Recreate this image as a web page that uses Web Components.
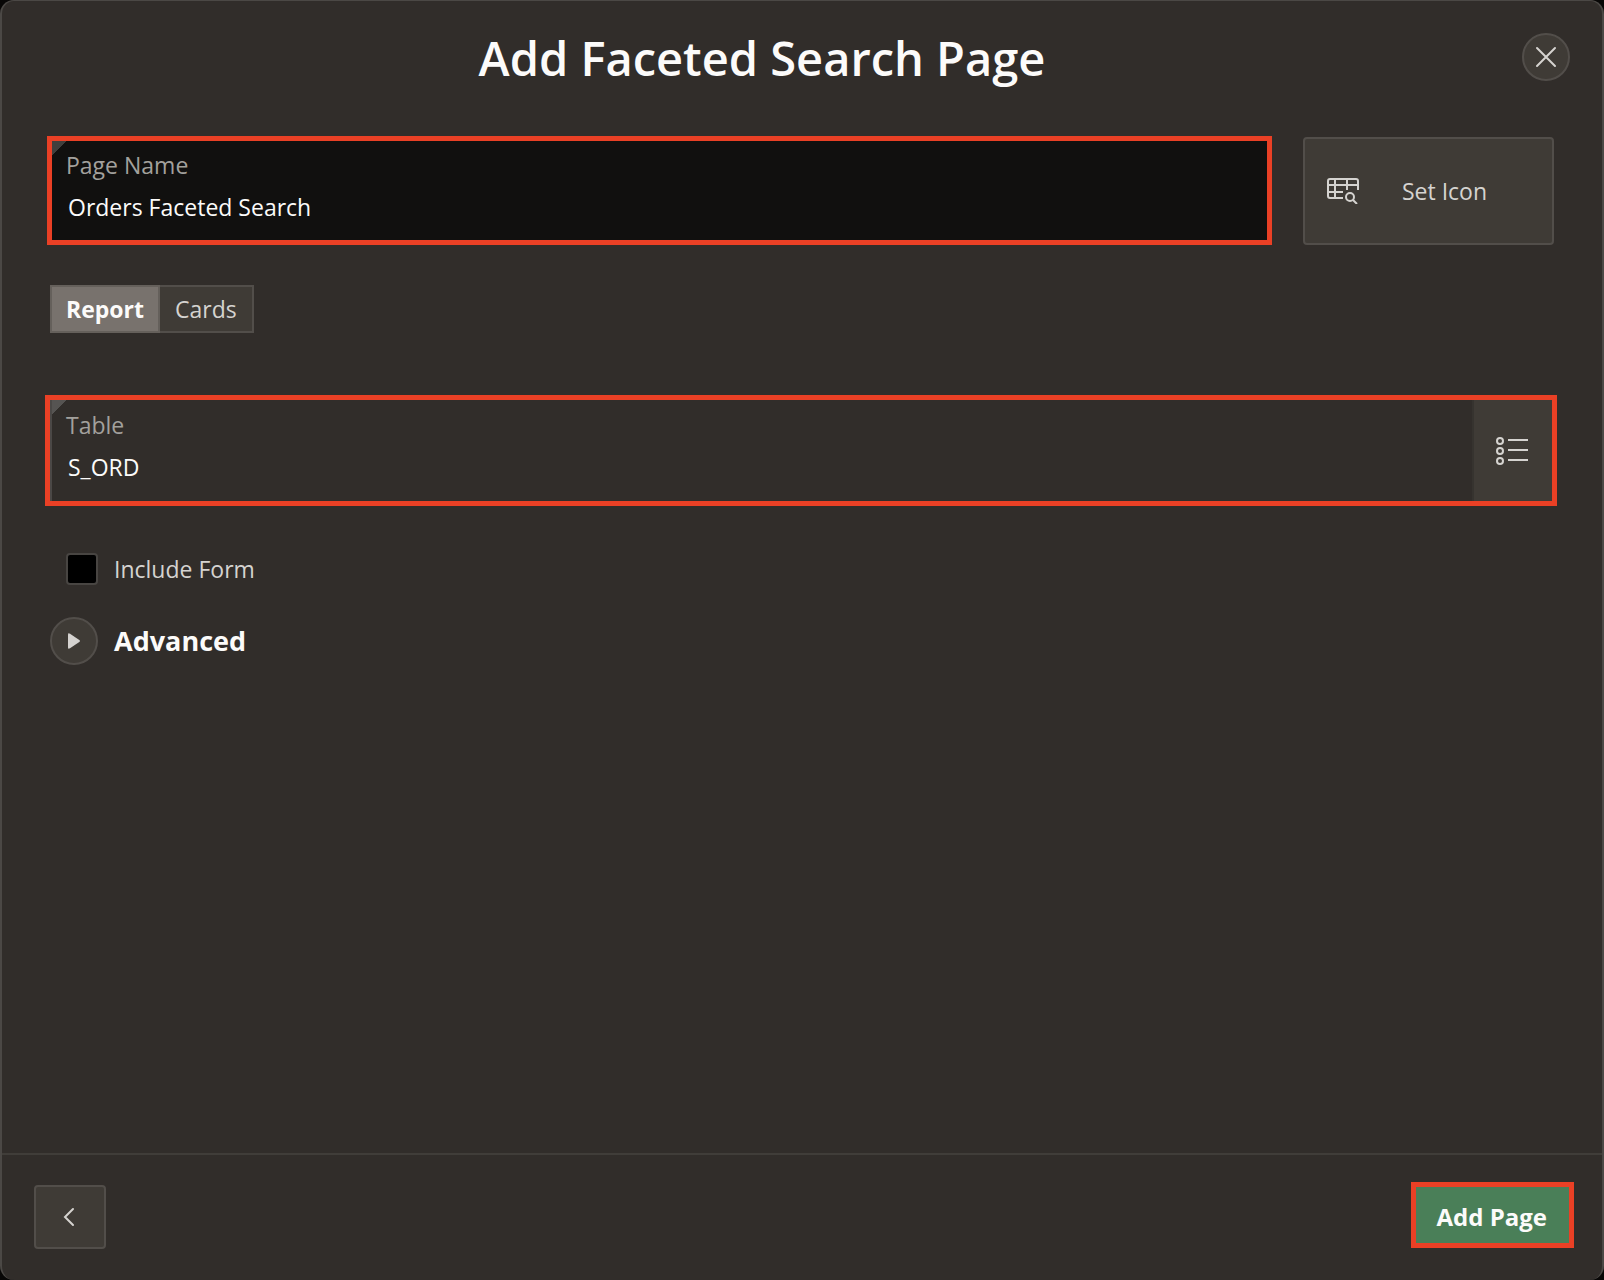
<!DOCTYPE html>
<html lang="en">
<head>
<meta charset="utf-8">
<title>Add Faceted Search Page</title>
<style>
  :root {
    --surface: #312d2a;
    --raised: #3f3b36;
    --line: #524e4a;
    --text: #fcfbfa;
    --text-soft: #d5d3d0;
    --text-muted: #a3a19d;
    --mark: #ea4025;
  }
  body { margin: 0; background: #080706; color: var(--text); font: 23px/32px "Open Sans", "Noto Sans", sans-serif; }
</style>
</head>
<body>
<wizard-dialog>
  <span slot="title">Add Faceted Search Page</span>
  <form-row>
    <text-field marked filled label="Page Name" value="Orders Faceted Search"></text-field>
    <icon-picker>Set Icon</icon-picker>
  </form-row>
  <pill-group></pill-group>
  <text-field marked lov label="Table" value="S_ORD"></text-field>
  <check-option>Include Form</check-option>
  <collapse-region>Advanced</collapse-region>
  <nav-button slot="footer" kind="back"></nav-button>
  <nav-button slot="footer" kind="hot">Add Page</nav-button>
</wizard-dialog>

<script>
const define = (name, render) => customElements.define(name, class extends HTMLElement {
  connectedCallback() {
    if (this.shadowRoot) return;
    this.attachShadow({ mode: "open" }).innerHTML =
      "<style>*{box-sizing:border-box}button,input{font:inherit;margin:0}button{cursor:pointer}svg{display:block;flex:none}</style>" + render(this);
  }
});

define("wizard-dialog", () => `
  <style>
    :host { display: flex; flex-direction: column; min-height: 100vh; box-sizing: border-box; background: var(--surface);
      border: solid #4b4845; border-width: 1px 2px 0; border-radius: 14px; }
    header { display: flex; align-items: center; gap: 30px; padding: 24px 32px 24px 30px; }
    h1 { flex: 1; margin: 0; padding-top: 2px; text-align: center; font-size: 47px; line-height: 62px; font-weight: 600; }
    header button { display: grid; place-items: center; width: 48px; height: 48px; padding: 0; border-radius: 50%;
      border: 2px solid var(--line); background: var(--raised); color: var(--text-soft); }
    main { flex: 1; display: flex; flex-direction: column; padding: 23px 45px 32px 43px; }
    footer { display: flex; justify-content: space-between; align-items: flex-end; padding: 27px 28px 31px 32px; border-top: 2px solid #403d39; }
  </style>
  <header>
    <h1><slot name="title"></slot></h1>
    <button type="button" aria-label="Close"><svg width="22" height="22" viewBox="0 0 22 22" fill="none" stroke="currentColor" stroke-width="2" stroke-linecap="round"><path d="M2 2l18 18M20 2L2 20"/></svg></button>
  </header>
  <main><slot></slot></main>
  <footer><slot name="footer"></slot></footer>`);

define("form-row", () => `
  <style>
    :host { display: flex; gap: 31px; padding: 0 3px 0 2px; margin-bottom: 40px; }
    ::slotted(text-field) { flex: 1; }
  </style><slot></slot>`);

define("text-field", el => `
  <style>
    :host { display: flex; border: 5px solid var(--mark); background: var(--surface); }
    :host([filled]) { background: #11100f; }
    .box { flex: 1; min-width: 0; display: flex; flex-direction: column; gap: 10px; padding: 8px 14px 17px;
      background: linear-gradient(135deg, #403f3d 10px, transparent 10px); }
    :host([lov]) .box { border-left: 2px solid #4b4846; padding: 9px 14px 18px;
      background: linear-gradient(135deg, #565452 10px, transparent 10px); }
    label { color: var(--text-muted); }
    input { width: 100%; height: 32px; padding: 0 2px; border: 0; outline: 0; background: none; color: var(--text); }
    button { display: grid; place-items: center; width: 80px; padding: 0 2px 0 0; border: 0; border-left: 2px solid #36332f;
      background: var(--raised); color: var(--text-soft); }
  </style>
  <div class="box">
    <label for="f">${el.getAttribute("label")}</label>
    <input id="f" type="text" value="${el.getAttribute("value")}">
  </div>
  ${el.hasAttribute("lov") ? `<button type="button" aria-label="Choose table"><svg width="32" height="30" viewBox="0 0 32 30" fill="none" stroke="currentColor" stroke-width="2"><circle cx="4" cy="5" r="3"/><circle cx="4" cy="15" r="3"/><circle cx="4" cy="25" r="3"/><path d="M12 4h20M12 14h20M12 24h20"/></svg></button>` : ""}`);

define("icon-picker", () => `
  <style>
    :host { display: flex; width: 251px; padding-top: 1px; box-sizing: border-box; }
    button { flex: 1; display: flex; align-items: center; padding: 0 22px; border: 2px solid var(--line); border-radius: 4px;
      background: var(--raised); color: var(--text-soft); }
    span { flex: 1; text-align: center; }
  </style>
  <button type="button">
    <svg width="32" height="26" viewBox="0 0 32 26" fill="none" stroke="currentColor" stroke-width="2"><path d="M16 20H3a2 2 0 0 1-2-2V3a2 2 0 0 1 2-2h26a2 2 0 0 1 2 2v9M1 7h30M1 14h15M8 1v19M20 1v11"/><circle cx="23" cy="19" r="4"/><path d="M26 22l4 4"/></svg>
    <span><slot></slot></span>
  </button>`);

define("pill-group", () => `
  <style>
    :host { display: flex; padding-left: 5px; margin-bottom: 62px; }
    label { position: relative; display: flex; align-items: center; height: 48px; padding: 0 14px; border: 2px solid var(--line);
      background: var(--raised); color: var(--text-soft); }
    label + label { border-left: 0; padding: 0 15px; }
    input { position: absolute; inset: 0; opacity: 0; }
    label:has(:checked) { background: #78726d; border-color: #65605b; color: var(--text); font-weight: 700; }
  </style>
  <label><input type="radio" name="type" checked>Report</label>
  <label><input type="radio" name="type">Cards</label>`);

define("check-option", () => `
  <style>
    :host { display: flex; padding: 47px 21px 32px; }
    label { display: flex; align-items: center; gap: 16px; color: var(--text-soft); }
    input { appearance: none; width: 32px; height: 32px; border: 2px solid #484542; border-radius: 4px; background: #000; }
  </style>
  <label><input type="checkbox"><slot></slot></label>`);

define("collapse-region", () => `
  <style>
    :host { display: flex; align-items: center; gap: 16px; padding-left: 5px; }
    button { display: grid; place-items: center; width: 48px; height: 48px; padding: 0; border: 2px solid var(--line);
      border-radius: 50%; background: var(--raised); color: var(--text-soft); }
    h2 { margin: 0; font-size: 27px; line-height: 40px; font-weight: 700; }
  </style>
  <button type="button" aria-labelledby="t" aria-expanded="false"><svg width="12" height="16" viewBox="0 0 12 16" fill="currentColor"><path d="M0 1.500Q0-.5 2 .7L11.300 7Q12.600 8 11.300 9L2 15.300Q0 16.500 0 14.500z"/></svg></button>
  <h2 id="t"><slot></slot></h2>`);

define("nav-button", el => `
  <style>
    :host { display: flex; }
    :host([kind="hot"]) { padding-bottom: 1px; }
    button { display: grid; place-items: center; width: 72px; height: 64px; padding: 0 2px 0 0; border: 2px solid var(--line);
      border-radius: 4px; background: var(--raised); color: var(--text-soft); }
    :host([kind="hot"]) button { width: auto; height: 66px; padding: 4px 22px 0 21px; border: 5px solid var(--mark); border-radius: 0;
      background: #4a7f58; color: var(--text); font-size: 24px; font-weight: 700; }
  </style>
  <button type="button" ${el.getAttribute("kind") === "back" ? 'aria-label="Back"' : ""}>${el.getAttribute("kind") === "back"
    ? `<svg width="14" height="20" viewBox="0 0 14 20" fill="none" stroke="currentColor" stroke-width="2" stroke-linecap="round"><path d="M11 2L3 10l8 8"/></svg>`
    : `<slot></slot>`}</button>`);
</script>
</body>
</html>
